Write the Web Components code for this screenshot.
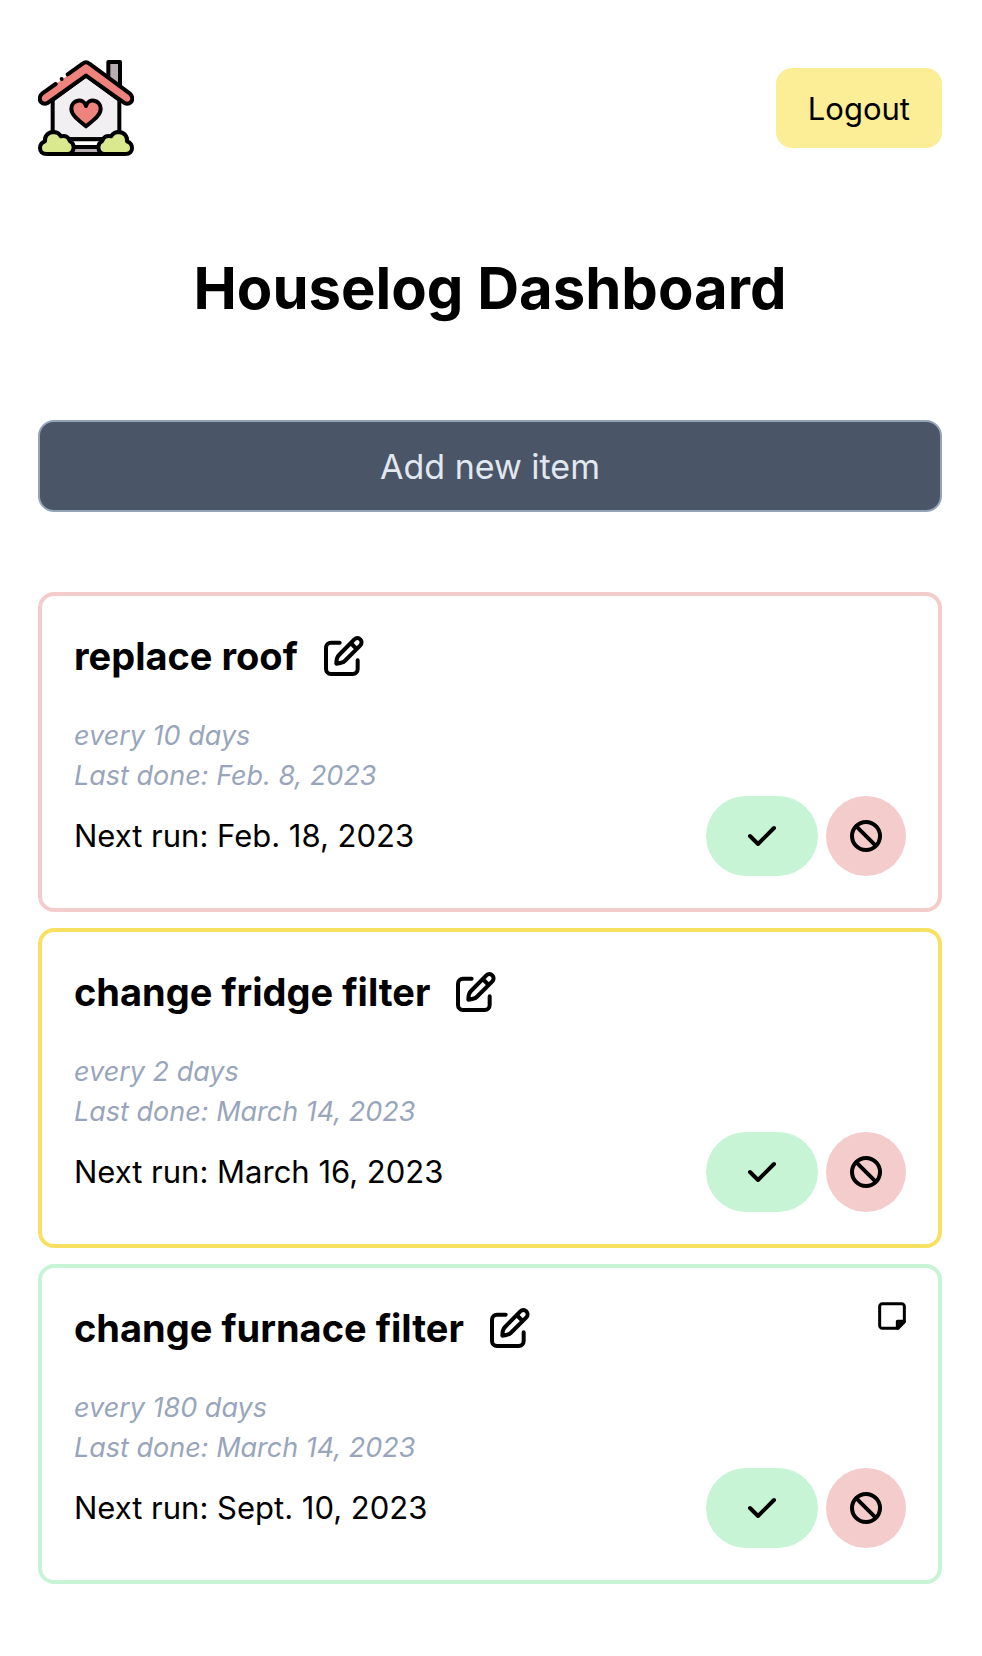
<!DOCTYPE html>
<html lang="en">
<head>
<meta charset="utf-8">
<meta name="viewport" content="width=device-width, initial-scale=1">
<title>Houselog Dashboard</title>
<style>
  body { margin: 0; background: #fff; color: #000; font-family: Inter, "Liberation Sans", sans-serif; }
</style>
</head>
<body>
<houselog-page>
  <houselog-header slot="header"></houselog-header>
  <span slot="title">Houselog Dashboard</span>
  <add-button slot="action">Add new item</add-button>
  <task-card status="overdue">
    <span slot="name">replace roof</span>
    <span slot="every">every 10 days</span>
    <span slot="last">Last done: Feb. 8, 2023</span>
    <span slot="next">Next run: Feb. 18, 2023</span>
  </task-card>
  <task-card status="due">
    <span slot="name">change fridge filter</span>
    <span slot="every">every 2 days</span>
    <span slot="last">Last done: March 14, 2023</span>
    <span slot="next">Next run: March 16, 2023</span>
  </task-card>
  <task-card status="ok" note>
    <span slot="name">change furnace filter</span>
    <span slot="every">every 180 days</span>
    <span slot="last">Last done: March 14, 2023</span>
    <span slot="next">Next run: Sept. 10, 2023</span>
  </task-card>
</houselog-page>

<script>
class Base extends HTMLElement {
  constructor() {
    super();
    this.attachShadow({ mode: "open" }).innerHTML = this.render();
  }
}

customElements.define("houselog-page", class extends Base {
  render() {
    return `
<style>
  :host { display: block; padding: 60px 40px 72px 38px; }
  h1 { margin: 96px 0; font-size: 58px; line-height: 72px; font-weight: 700; text-align: center; }
  section { display: flex; flex-direction: column; gap: 16px; margin-top: 80px; }
</style>
<slot name="header"></slot>
<main>
  <h1><slot name="title"></slot></h1>
  <slot name="action"></slot>
  <section aria-label="Items"><slot></slot></section>
</main>`;
  }
});

customElements.define("house-logo", class extends Base {
  render() {
    return `
<style>
  :host { display: block; width: 96px; height: 96px; }
  svg { display: block; width: 100%; height: 100%; }
</style>
<svg viewBox="24 30 288 288" fill="none" stroke="#000" stroke-width="12" stroke-linecap="round" stroke-linejoin="round" aria-hidden="true">
  <path d="M235 84V36h35v74" fill="#b9adb4"/>
  <path d="M68 150 168 76l100 74v118H68Z" fill="#f1eff1"/>
  <path d="M168 36 36 133c-9 8-8 19-3 24 6 5 14 5 21 1L168 75l114 83c7 4 15 4 21-1 5-5 6-16-3-24Z" fill="#ee827c" stroke="none"/>
  <path d="M77 102 36 131c-9 8-8 20-3 25 6 6 14 6 21 2L168 77l114 81c7 4 15 4 21-2 5-5 6-17-3-25L178 41c-7-6-13-6-20 0L113 73"/>
  <circle cx="95" cy="87" r="6" fill="#000" stroke="none"/>
  <path d="M168 229c-22-19-44-33-44-53 0-27 37-34 44-8 7-26 44-19 44 8 0 20-22 34-44 53Z" fill="#ee827c"/>
  <path d="M120 290h96v22h-96z" fill="#b9adb4"/>
  <path d="M117 268h102v21H117z" fill="#fff" stroke="none"/>
  <path d="M112 268h112M125 291h86"/>
  <path d="M50 312c-14 0-20-8-20-18 0-9 6-17 15-20-2-16 9-27 24-28 11 0 19 5 24 13 13-4 24 3 26 14 8 4 12 10 12 19 0 11-8 20-18 20Z" fill="#dae98e"/>
  <path d="M286 312c14 0 20-8 20-18 0-9-6-17-15-20 2-16-9-27-24-28-11 0-19 5-24 13-13-4-24 3-26 14-8 4-12 10-12 19 0 11 8 20 18 20Z" fill="#dae98e"/>
  <path d="M110 312h116"/>
</svg>`;
  }
});

customElements.define("houselog-header", class extends Base {
  render() {
    return `
<style>
  :host { display: block; }
  header { display: flex; align-items: center; justify-content: space-between; }
  button { height: 80px; padding: 0 32px; border: 0; border-radius: 16px; background: #fbee96; color: inherit; font: inherit; font-size: 31px; cursor: pointer; }
</style>
<header><house-logo></house-logo><button type="button">Logout</button></header>`;
  }
});

customElements.define("add-button", class extends Base {
  render() {
    return `
<style>
  :host { display: block; }
  button { display: block; box-sizing: border-box; width: 100%; height: 92px; border: 2px solid #94a3b8; border-radius: 16px; background: #4a5567; color: #e2e8f0; font: inherit; font-size: 34px; cursor: pointer; }
</style>
<button type="button"><slot></slot></button>`;
  }
});

customElements.define("task-card", class extends Base {
  render() {
    return `
<style>
  :host { display: block; border: 4px solid #c7f4d4; border-radius: 16px; padding: 32px; }
  :host([status="overdue"]) { border-color: #f4cccb; }
  :host([status="due"]) { border-color: #f8e062; }
  svg { display: block; fill: none; stroke: #000; stroke-linecap: round; stroke-linejoin: round; }
  .top { display: flex; align-items: flex-start; justify-content: space-between; margin-bottom: 32px; }
  .name { display: flex; align-items: center; gap: 26px; }
  h2 { margin: 0; font-size: 38px; line-height: 56px; font-weight: 700; }
  button { display: grid; place-items: center; border: 0; padding: 0; background: none; cursor: pointer; }
  .note { display: none; }
  :host([note]) .note { display: grid; }
  p { margin: 0; }
  .meta { font-size: 27px; line-height: 40px; font-style: italic; color: #98a5ba; }
  .bottom { display: flex; align-items: center; justify-content: space-between; font-size: 31px; line-height: 48px; }
  .actions { display: flex; gap: 8px; }
  .done, .skip { height: 80px; border-radius: 40px; }
  .done { width: 112px; background: #c7f4d4; }
  .skip { width: 80px; background: #f4cccb; }
</style>
<article>
  <div class="top">
    <div class="name">
      <h2><slot name="name"></slot></h2>
      <button type="button" aria-label="Edit">
        <svg width="40" height="40" viewBox="45 48 120 120" stroke-width="12"><path d="M92 68H66a15 15 0 0 0-15 15v64a15 15 0 0 0 15 15h65a15 15 0 0 0 15-15v-26M82 131c0-11 2-20 8-26l46-47c5-5 13-5 18 0s5 13 0 18l-47 47c-6 6-14 7-25 8ZM125 69l18 18"/></svg>
      </button>
    </div>
    <button type="button" class="note" aria-label="Note">
      <svg width="28" height="32" viewBox="54 120 84 96" stroke-width="9"><path d="M111 205H67a8 8 0 0 1-8-8v-58a8 8 0 0 1 8-8h58a8 8 0 0 1 8 8v44"/><path d="M112 184h21v2l-19 19h-2Z" fill="#000"/></svg>
    </button>
  </div>
  <p class="meta"><slot name="every"></slot></p>
  <p class="meta"><slot name="last"></slot></p>
  <div class="bottom">
    <p><slot name="next"></slot></p>
    <div class="actions">
      <button type="button" class="done" aria-label="Mark done">
        <svg width="32" height="32" viewBox="168 120 96 96" stroke-width="12"><path d="m180 168 24 24 48-48"/></svg>
      </button>
      <button type="button" class="skip" aria-label="Skip">
        <svg width="32" height="32" viewBox="480 120 96 96" stroke-width="12"><circle cx="528" cy="168" r="42"/><path d="m499 139 58 58"/></svg>
      </button>
    </div>
  </div>
</article>`;
  }
});
</script>
</body>
</html>
